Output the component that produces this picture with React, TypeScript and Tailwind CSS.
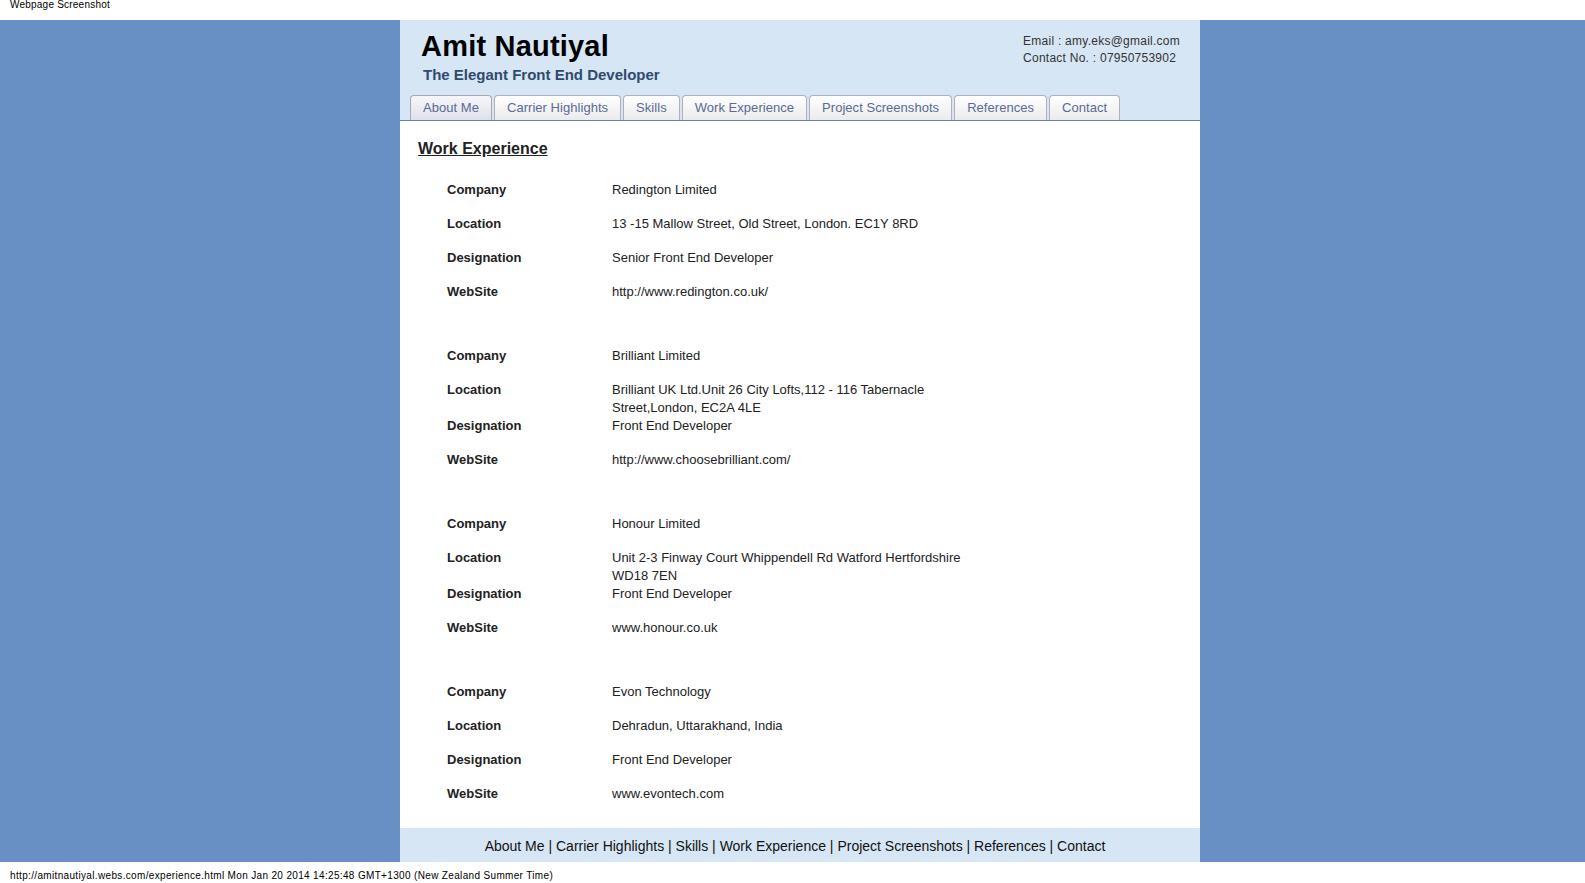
import React from "react";

type Row = { label: string; value: React.ReactNode };

const groups: Row[][] = [
  [
    { label: "Company", value: "Redington Limited" },
    { label: "Location", value: "13 -15 Mallow Street, Old Street, London. EC1Y 8RD" },
    { label: "Designation", value: "Senior Front End Developer" },
    { label: "WebSite", value: "http://www.redington.co.uk/" },
  ],
  [
    { label: "Company", value: "Brilliant Limited" },
    {
      label: "Location",
      value: (
        <>
          Brilliant UK Ltd.Unit 26 City Lofts,112 - 116 Tabernacle
          <br />
          Street,London, EC2A 4LE
        </>
      ),
    },
    { label: "Designation", value: "Front End Developer" },
    { label: "WebSite", value: "http://www.choosebrilliant.com/" },
  ],
  [
    { label: "Company", value: "Honour Limited" },
    {
      label: "Location",
      value: (
        <>
          Unit 2-3 Finway Court Whippendell Rd Watford Hertfordshire
          <br />
          WD18 7EN
        </>
      ),
    },
    { label: "Designation", value: "Front End Developer" },
    { label: "WebSite", value: "www.honour.co.uk" },
  ],
  [
    { label: "Company", value: "Evon Technology" },
    { label: "Location", value: "Dehradun, Uttarakhand, India" },
    { label: "Designation", value: "Front End Developer" },
    { label: "WebSite", value: "www.evontech.com" },
  ],
];

const tabs = [
  "About Me",
  "Carrier Highlights",
  "Skills",
  "Work Experience",
  "Project Screenshots",
  "References",
  "Contact",
];

export default function App() {
  return (
    <div
      className="w-[1585px] h-[883px] bg-white text-black overflow-hidden"
      style={{ fontFamily: '"Liberation Sans", Arial, sans-serif' }}
    >
      <div className="h-[20px] pl-[10px] text-[10px] leading-[10px] tracking-[0.22px] text-black">
        Webpage Screenshot
      </div>

      <div className="h-[842px] bg-[#6890c4] pl-[400px]">
        <div className="w-[800px] h-full flex flex-col">
          {/* Header */}
          <div className="h-[101px] shrink-0 bg-[#d7e6f5] border-b border-[#6a7ebd] flex flex-col">
            <div className="flex justify-between">
              <div className="pt-[10px] pl-[21px]">
                <div className="text-[29px] leading-[32px] font-bold text-black tracking-[0.2px]">Amit Nautiyal</div>
                <div className="mt-[4px] ml-[2px] text-[15px] leading-[17px] font-bold text-[#2f4a6d]">
                  The Elegant Front End Developer
                </div>
              </div>
              <div className="pt-[13px] pr-[20px] text-[12px] leading-[17px] tracking-[0.25px] text-[#333333]">
                <div>Email : amy.eks@gmail.com</div>
                <div>Contact No. : 07950753902</div>
              </div>
            </div>
            <div className="mt-[12px] pl-[10px] flex gap-[2px] items-end">
              {tabs.map((t, i) => (
                <div
                  key={t}
                  className={
                    i === 0
                      ? "h-[25px] px-[12px] flex items-center border border-b-0 border-[#a8a8b4] rounded-t-[4px] bg-gradient-to-b from-[#f6f6fa] to-[#e0e0e8] text-[13px] tracking-[0.04px] text-[#5a6a98]"
                      : "h-[25px] px-[12px] flex items-center border border-b-0 border-[#b0b0b8] rounded-t-[4px] bg-gradient-to-b from-[#ffffff] to-[#ebebeb] text-[13px] tracking-[0.04px] text-[#5a6a98]"
                  }
                >
                  {t}
                </div>
              ))}
            </div>
          </div>

          {/* Content */}
          <div className="flex-1 bg-white pt-[19px] pl-[18px] pb-[9px]">
            <div className="text-[16px] leading-[18px] font-bold underline text-[#222222]">Work Experience</div>
            <div className="mt-[23px] pl-[29px] flex flex-col gap-[30px]">
              {groups.map((g, gi) => (
                <div key={gi} className="flex flex-col">
                  {g.map((r, ri) => (
                    <div key={ri} className="flex min-h-[34px] text-[13px] leading-[18px]">
                      <div className="w-[165px] font-bold text-[#222222]">{r.label}</div>
                      <div className="whitespace-nowrap text-[#222222]">{r.value}</div>
                    </div>
                  ))}
                </div>
              ))}
            </div>
          </div>

          {/* Footer */}
          <div className="h-[34px] shrink-0 pt-[3px] bg-[#d7e6f5] flex items-center justify-center text-[14px] text-[#111111] pr-[10px]">
            About Me&nbsp;|&nbsp;Carrier Highlights&nbsp;|&nbsp;Skills&nbsp;|&nbsp;Work Experience&nbsp;|&nbsp;Project Screenshots&nbsp;|&nbsp;References&nbsp;|&nbsp;Contact
          </div>
        </div>
      </div>

      <div className="h-[21px] pt-[9px] pl-[10px] text-[10px] leading-[10px] tracking-[0.34px] text-black whitespace-nowrap">
        http://amitnautiyal.webs.com/experience.html Mon Jan 20 2014 14:25:48 GMT+1300 (New Zealand Summer Time)
      </div>
    </div>
  );
}
